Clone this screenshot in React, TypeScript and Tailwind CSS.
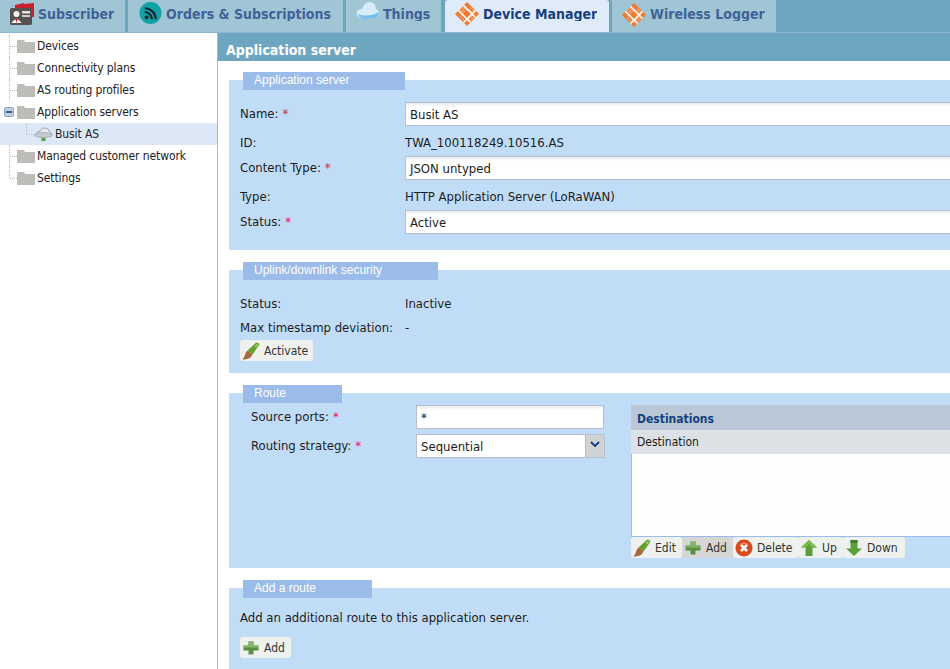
import React from 'react';

const font = { fontFamily: '"DejaVu Sans Condensed", "DejaVu Sans", sans-serif' };

const Brush = () => (
  <svg width="18" height="18" viewBox="0 0 18 18">
    <path d="M5.5 8.5 L14 0.8 Q17.5 0 17.2 3 L10.5 12.5 Z" fill="#62a02f" />
    <path d="M12.5 4 L15.5 1.5 L16.2 3 L14 5.5 Z" fill="#9fd06a" />
    <path d="M5.5 8.5 L10.5 12.5 L8.5 15.5 Q5 18 0.5 17.5 Q2.5 15 3 13 Q3.5 10 5.5 8.5 Z" fill="#a9663f" />
  </svg>
);

const Plus = () => (
  <svg width="16" height="16" viewBox="0 0 16 16">
    <path d="M5.5 1.5 H10.5 V5.5 H15.5 V10.5 H10.5 V14.5 H5.5 V10.5 H0.5 V5.5 H5.5 Z" fill="#5a8f45" />
    <path d="M5.5 1.5 H10.5 V5.5 H15.5 V7.5 H0.5 V5.5 H5.5 Z" fill="#83b56b" />
  </svg>
);

const Del = () => (
  <svg width="18" height="18" viewBox="0 0 18 18">
    <circle cx="9" cy="9" r="8.5" fill="#d9481c" />
    <path d="M3 6 Q9 1 15 6 Q9 4.5 3 6 Z" fill="#ee8a5e" />
    <path d="M6 6 L12 12 M12 6 L6 12" stroke="#fff" strokeWidth="2.6" />
  </svg>
);

const Up = () => (
  <svg width="18" height="18" viewBox="0 0 18 18">
    <path d="M9 1 L17 8.5 H12.5 V17 H5.5 V8.5 H1 Z" fill="#5c9e38" />
    <path d="M9 1 L17 8.5 H12.5 L9 5 L5.5 8.5 H1 Z" fill="#7dbb52" />
  </svg>
);

const Down = () => (
  <svg width="18" height="18" viewBox="0 0 18 18">
    <path d="M9 17 L17 9.5 H12.5 V1 H5.5 V9.5 H1 Z" fill="#5c9e38" />
    <path d="M5.5 1 H12.5 V4 H5.5 Z" fill="#3f7d2a" />
  </svg>
);

const Folder = () => (
  <svg width="18" height="14" viewBox="0 0 18 14" className="shrink-0">
    <path d="M0 1 H7 L8 3 H18 V14 H0 Z" fill="#bdbcb8" />
  </svg>
);

const Cloud = () => (
  <svg width="19" height="16" viewBox="0 0 19 16" className="shrink-0">
    <path d="M3 8 Q3 5 6 5 Q8 1 12 2 Q15 3 15 5 Q18 6 17 9 Z" fill="#e8eaee" stroke="#9097a3" strokeWidth="0.8" />
    <ellipse cx="9.5" cy="9" rx="9" ry="2.4" fill="#c7cbd2" stroke="#8b919c" strokeWidth="0.6" />
    <rect x="7.5" y="12" width="4" height="3" fill="#4da63c" />
  </svg>
);

const Diamond = () => (
  <svg width="24" height="24" viewBox="0 0 24 24" className="shrink-0">
    <path d="M12 0 L24 12 L12 24 L0 12 Z" fill="#ee7b30" />
    <path d="M3.5 8.5 L15.5 20.5 M8.5 3.5 L20.5 15.5 M8.5 20.5 L20.5 8.5" stroke="#fff" strokeWidth="1.6" />
    <path d="M3 10 L10 3 M4.5 11.5 L11.5 4.5 M6 13 L13 6 M14 7 L18 11 M15.5 5.5 L19.5 9.5 M5 14 L9 18 M6.5 12.5 L10.5 16.5 M14 20 L20 14 M12.5 18.5 L18.5 12.5" stroke="#fff" strokeWidth="0.5" />
  </svg>
);

const Tab = ({ icon, label, active, className }: { icon: React.ReactNode; label: string; active?: boolean; className: string }) => (
  <div className={`${className} h-[32px] overflow-hidden flex items-start ${active ? 'bg-[#e0ebf9] text-[#17407f] rounded-tl-[3px] rounded-tr-[3px]' : 'bg-[#a0c5d5] text-[#3f6297]'}`}>
    {icon}
    <span className="text-[14px] font-bold leading-[29px] h-[21px] overflow-hidden whitespace-nowrap">{label}</span>
  </div>
);

const TreeRow = ({ label, icon, last, collapse }: { label: string; icon: React.ReactNode; last?: boolean; collapse?: boolean }) => (
  <div className="h-[22px] flex items-center text-[12px] tracking-[-0.1px] text-[#222] pl-[9px]">
    {collapse ? (
      <span className="-ml-[5px] mr-[3px] w-[10px] h-[10px] bg-[#c3cfe0] border border-[#8ea3bf] rounded-[2px] flex items-center justify-center shrink-0">
        <span className="w-[6px] h-[2px] bg-[#3f5f8a]" />
      </span>
    ) : (
      <>
        <span className={`border-l border-dotted border-[#bbb] shrink-0 ${last ? 'self-start h-[11px]' : 'self-stretch'}`} />
        <span className="w-[7px] border-t border-dotted border-[#bbb] shrink-0" />
      </>
    )}
    {icon}
    <span className="ml-[2px] whitespace-nowrap">{label}</span>
  </div>
);

const Section = ({ title, legend, className, children }: { title: string; legend: string; className: string; children: React.ReactNode }) => (
  <section className={`ml-[11px] w-[800px] bg-[#c1dcf6] ${className}`}>
    <div className={`-translate-y-[8px] ml-[14px] h-[18px] bg-[#9bbbe8] text-white text-[12px] leading-[16px] pl-[11px] ${legend}`} style={{ fontFamily: '"Liberation Sans", sans-serif' }}>
      {title}
    </div>
    {children}
  </section>
);

const Req = () => <span className="text-[#e8203a] ml-[4px]">*</span>;

const inputClass = 'bg-[linear-gradient(#e8ecef,#ffffff_4px)] border border-[#b5bfd0] pl-[4px] leading-[24px]';

const Field = ({ label, required, value }: { label: string; required?: boolean; value: string }) => (
  <div className="h-[24px] flex items-center text-[13px] text-[#1c1c1c]">
    <div className="w-[176px] pl-[11px] shrink-0 -mt-[1px]">{label}{required && <Req />}</div>
    <div className={`w-[600px] h-[24px] shrink-0 ${inputClass}`}>{value}</div>
  </div>
);

const Info = ({ label, value, className }: { label: string; value: string; className: string }) => (
  <div className={`flex items-center text-[13px] text-[#1c1c1c] ${className}`}>
    <div className="w-[176px] pl-[11px] shrink-0 whitespace-nowrap">{label}</div>
    <div className="whitespace-nowrap">{value}</div>
  </div>
);

const ToolBtn = ({ icon, label, w, hover }: { icon: React.ReactNode; label: string; w: string; hover?: boolean }) => (
  <div className={`${w} h-[21px] rounded-[3px] flex items-center pl-[2px] text-[12px] text-[#333] ${hover ? 'bg-[#d6d6d4]' : 'bg-[#eef1ee]'}`}>
    <span className="w-[18px] mr-[4px] flex justify-center shrink-0">{icon}</span>
    <span>{label}</span>
  </div>
);

export default function App() {
  return (
    <div className="w-[950px] h-[669px] overflow-hidden bg-white flex flex-col" style={font}>
      <div className="h-[33px] shrink-0 bg-[#6ea6c2] border-b border-[#8fb4d8] flex">
        <Tab className="w-[125px] mr-[3px] pl-[10px] gap-[3px]" label="Subscriber" icon={
          <svg width="25" height="23" viewBox="0 0 25 23" className="shrink-0 mt-[2px]">
            <path d="M5 6 V3 L14 1 V2 L24 1 V15 H20 V6 Z" fill="#c8202c" />
            <rect x="0" y="6" width="22" height="17" rx="1.5" fill="#56524f" />
            <rect x="12" y="9" width="8" height="2.5" fill="#e4e4e4" />
            <rect x="12" y="13" width="8" height="2" fill="#cfcfcf" />
            <circle cx="6.5" cy="12" r="3" fill="#f2f2f2" />
            <path d="M1.5 21 Q6.5 13.5 11.5 21 Z" fill="#f6f6f6" />
            <path d="M5.5 17 H7.5 L6.5 21 Z" fill="#c8202c" />
          </svg>
        } />
        <Tab className="w-[215px] mr-[3px] pl-[11px] gap-[4px]" label="Orders & Subscriptions" icon={
          <svg width="23" height="24" viewBox="0 0 24 24" className="shrink-0 mt-[1px]">
            <circle cx="12" cy="12" r="11.5" fill="#0fa3a3" />
            <circle cx="8" cy="16.5" r="2" fill="#123" />
            <path d="M6 11 A7.5 7.5 0 0 1 13.5 18.5 M6 7 A11.5 11.5 0 0 1 17.5 18.5" fill="none" stroke="#123" strokeWidth="2.2" />
          </svg>
        } />
        <Tab className="w-[95px] mr-[4px] pl-[10px] gap-[3px]" label="Things" icon={
          <svg width="24" height="22" viewBox="0 0 24 22" className="shrink-0">
            <path d="M5 18 Q0 17 1 12 Q2 9 6 9 Q8 2 14 2 Q20 3 20 9 Q24 11 23 15 Q22 18 18 18 Z" fill="#d6ecfa" />
            <path d="M2 14 Q12 18 23 12 Q23 18 18 18 H12 L8 22 L9 18 H5 Q3 17 2 14 Z" fill="#79bfee" />
          </svg>
        } />
        <Tab active className="w-[164px] mr-[3px] pl-[10px] gap-[4px]" label="Device Manager" icon={<div className="mt-[2px]"><Diamond /></div>} />
        <Tab className="w-[164px] pl-[10px] gap-[4px]" label="Wireless Logger" icon={<div className="mt-[3px]"><Diamond /></div>} />
      </div>

      <div className="flex-1 flex min-h-0">
        <aside className="w-[218px] shrink-0 border-r border-[#9fb9df] pt-[2px]">
          <TreeRow label="Devices" icon={<Folder />} />
          <TreeRow label="Connectivity plans" icon={<Folder />} />
          <TreeRow label="AS routing profiles" icon={<Folder />} />
          <TreeRow label="Application servers" icon={<Folder />} collapse />
          <div className="h-[22px] flex items-center text-[12px] tracking-[-0.1px] text-[#222] pl-[26px] bg-[#dde8f7]">
            <span className="self-start h-[11px] border-l border-dotted border-[#bbb] shrink-0" />
            <span className="w-[7px] border-t border-dotted border-[#bbb] shrink-0" />
            <Cloud />
            <span className="ml-[2px] whitespace-nowrap">Busit AS</span>
          </div>
          <TreeRow label="Managed customer network" icon={<Folder />} />
          <TreeRow label="Settings" icon={<Folder />} last />
        </aside>

        <main className="flex-1 min-w-0 overflow-hidden">
          <div className="h-[28px] bg-[#6ea6c2] text-white font-bold text-[14px] leading-[34px] pl-[8px] overflow-hidden">Application server</div>

          <Section title="Application server" legend="w-[162px]" className="mt-[19px] h-[170px]">
            <div className="mt-[4px] flex flex-col">
              <Field label="Name:" required value="Busit AS" />
              <Info label="ID:" value="TWA_100118249.10516.AS" className="h-[30px] pt-[3px]" />
              <Field label="Content Type:" required value="JSON untyped" />
              <Info label="Type:" value="HTTP Application Server (LoRaWAN)" className="h-[30px] pt-[3px]" />
              <Field label="Status:" required value="Active" />
            </div>
          </Section>

          <Section title="Uplink/downlink security" legend="w-[195px]" className="mt-[20px] h-[103px]">
            <div className="flex flex-col">
              <Info label="Status:" value="Inactive" className="h-[24px] mt-[3px] pt-[1px]" />
              <Info label="Max timestamp deviation:" value="-" className="h-[24px] pt-[1px]" />
              <div className="ml-[11px] mt-[1px]">
                <ToolBtn w="w-[73px]" label="Activate" icon={<Brush />} />
              </div>
            </div>
          </Section>

          <Section title="Route" legend="w-[99px]" className="mt-[20px] h-[175px]">
            <div className="flex -mt-[6px]">
              <div className="w-[187px] shrink-0 pl-[22px] text-[13px] text-[#1c1c1c]">
                <div className="h-[24px] flex items-center">Source ports:<Req /></div>
                <div className="h-[24px] flex items-center mt-[5px]">Routing strategy:<Req /></div>
              </div>
              <div className="w-[189px] shrink-0 text-[13px] text-[#1c1c1c]">
                <div className={`h-[24px] w-[188px] ${inputClass}`}>*</div>
                <div className="mt-[5px] h-[24px] bg-white border border-[#b5bfd0] flex">
                  <div className="flex-1 pl-[4px] leading-[24px]">Sequential</div>
                  <div className="w-[19px] bg-[#cfd4d2] border-l border-[#b5bfd0] flex items-start pt-[6px] justify-center">
                    <svg width="10" height="6" viewBox="0 0 10 6"><path d="M1 1 L5 5 L9 1" fill="none" stroke="#1d4180" strokeWidth="2" /></svg>
                  </div>
                </div>
              </div>
              <div className="ml-[26px] flex-1 text-[12px]">
                <div className="h-[25px] bg-[#b9c7d7] pl-[6px] font-bold text-[#17407f] leading-[28px]">Destinations</div>
                <div className="h-[24px] bg-[#dce1e5] pl-[6px] leading-[24px] text-[#1c1c1c]">Destination</div>
                <div className="h-[83px] bg-[#fefefc] border-l border-b border-[#9bbbe8]" />
                <div className="flex">
                  <ToolBtn w="w-[51px]" label="Edit" icon={<Brush />} />
                  <ToolBtn w="w-[51px]" label="Add" icon={<Plus />} hover />
                  <ToolBtn w="w-[65px]" label="Delete" icon={<Del />} />
                  <ToolBtn w="w-[45px]" label="Up" icon={<Up />} />
                  <ToolBtn w="w-[62px]" label="Down" icon={<Down />} />
                </div>
              </div>
            </div>
          </Section>

          <Section title="Add a route" legend="w-[129px]" className="mt-[20px] h-[90px]">
            <div className="pl-[11px] text-[13px] text-[#1c1c1c] leading-[14px] mt-[5px]">Add an additional route to this application server.</div>
            <div className="ml-[11px] mt-[12px]">
              <ToolBtn w="w-[51px]" label="Add" icon={<Plus />} />
            </div>
          </Section>
        </main>
      </div>
    </div>
  );
}
